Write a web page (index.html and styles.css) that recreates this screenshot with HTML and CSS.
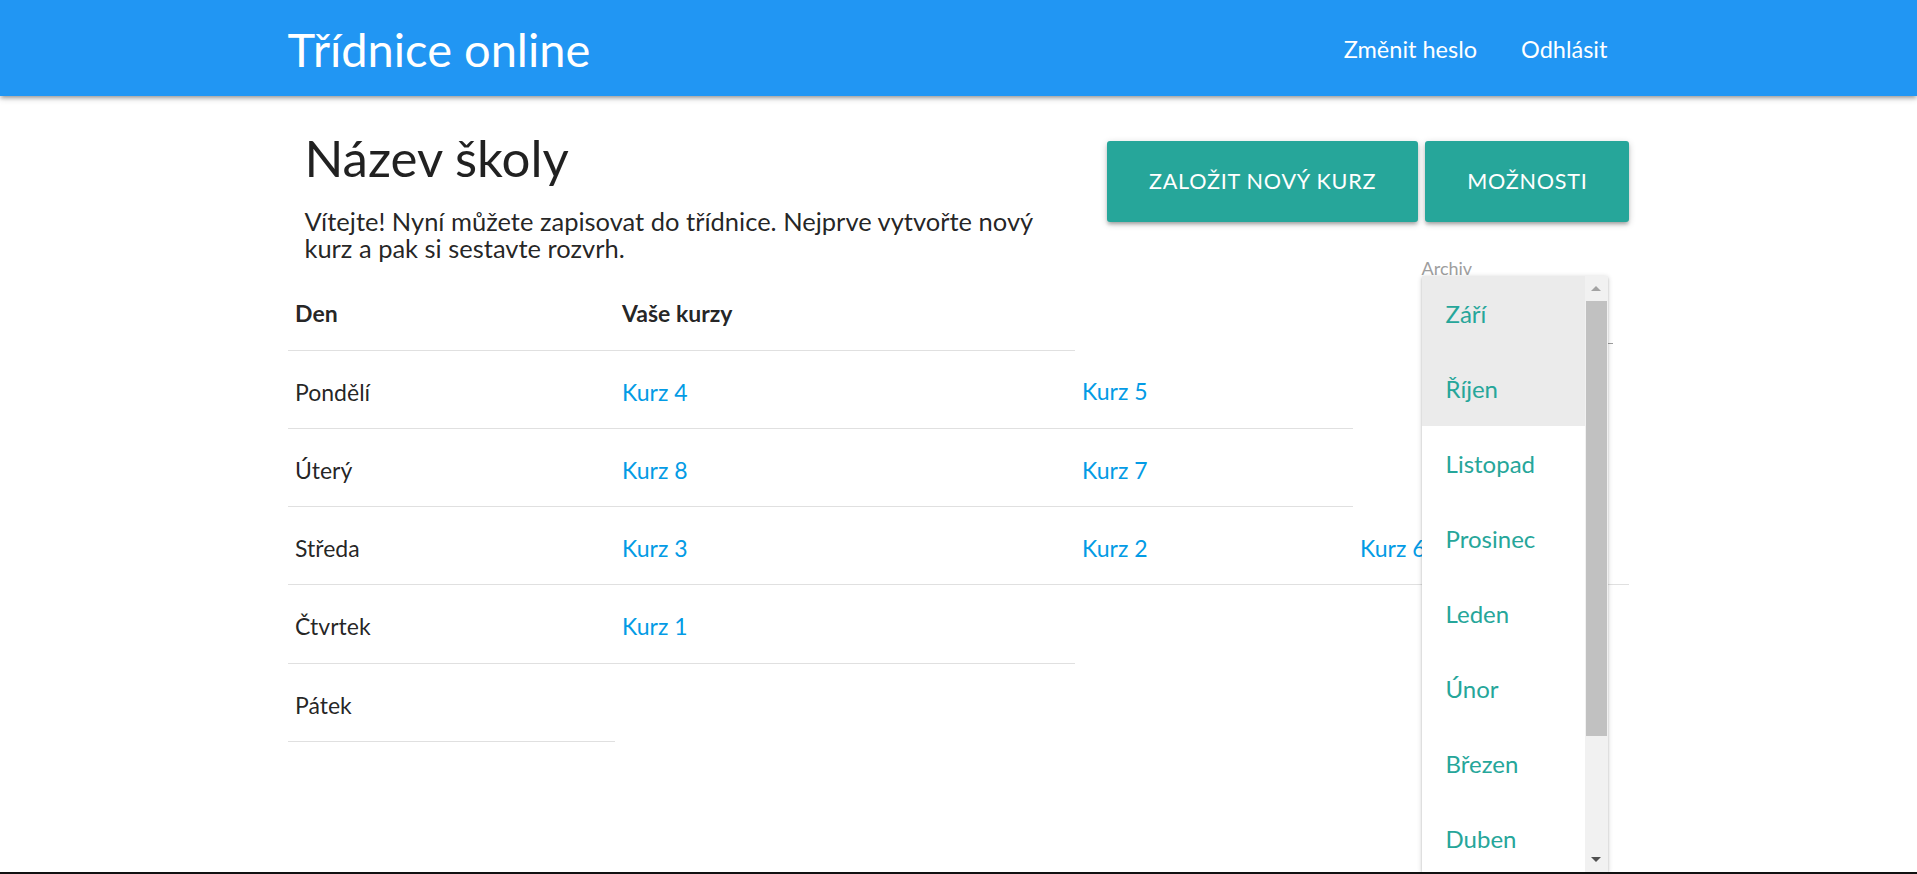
FILE: index.html
```html
<!DOCTYPE html>
<html lang="cs">
<head>
<meta charset="utf-8">
<title>Třídnice online</title>
<link rel="stylesheet" href="styles.css">
</head>
<body>
<header class="topbar">
  <div class="container nav">
    <a class="brand" href="#">Třídnice online</a>
    <ul class="nav-links">
      <li><a href="#">Změnit heslo</a></li>
      <li><a href="#">Odhlásit</a></li>
    </ul>
  </div>
</header>
<main class="container">
  <div class="top-row">
    <div class="intro">
      <h4 class="school">Název školy</h4>
      <p class="welcome">Vítejte! Nyní můžete zapisovat do třídnice. Nejprve vytvořte nový kurz a pak si sestavte rozvrh.</p>
    </div>
    <div class="actions">
      <div class="btns">
        <a class="btn" href="#">Založit nový kurz</a>
        <a class="btn" href="#">Možnosti</a>
      </div>
      <div class="select-field">
        <label class="select-label">Archiv</label>
        <div class="select-input">
          <div class="dropdown">
            <ul class="dropdown-items">
              <li class="item selected">Září</li>
              <li class="item selected">Říjen</li>
              <li class="item">Listopad</li>
              <li class="item">Prosinec</li>
              <li class="item">Leden</li>
              <li class="item">Únor</li>
              <li class="item">Březen</li>
              <li class="item">Duben</li>
            </ul>
            <div class="scrollbar">
              <div class="sb-btn"><span class="arrow-up"></span></div>
              <div class="sb-thumb"></div>
              <div class="sb-space"></div>
              <div class="sb-btn"><span class="arrow-down"></span></div>
            </div>
          </div>
        </div>
      </div>
    </div>
  </div>
  <table class="schedule">
    <colgroup>
      <col class="c-day">
      <col class="c-k1">
      <col class="c-k2">
      <col class="c-k3">
    </colgroup>
    <tr><th>Den</th><th>Vaše kurzy</th></tr>
    <tr><td>Pondělí</td><td><a href="#">Kurz 4</a></td><td><a href="#">Kurz 5</a></td></tr>
    <tr><td>Úterý</td><td><a href="#">Kurz 8</a></td><td><a href="#">Kurz 7</a></td></tr>
    <tr><td>Středa</td><td><a href="#">Kurz 3</a></td><td><a href="#">Kurz 2</a></td><td><a href="#">Kurz 6</a></td></tr>
    <tr><td>Čtvrtek</td><td><a href="#">Kurz 1</a></td></tr>
    <tr><td>Pátek</td></tr>
  </table>
</main>
<div class="screen-edge"></div>
</body>
</html>
```

FILE: styles.css
```css
html, body {
  margin: 0;
  padding: 0;
  overflow: hidden;
  height: 100%;
}
body {
  font-family: Lato, "Open Sans", sans-serif;
  color: rgba(0, 0, 0, 0.87);
  background: #fff;
}
.container {
  width: 70%;
  margin: 0 auto;
}
a {
  text-decoration: none;
}

/* top bar */
.topbar {
  height: 96px;
  background: #2196f3;
  box-shadow: 0 3px 3px 0 rgba(0,0,0,0.14), 0 4px 2px -3px rgba(0,0,0,0.12), 0 2px 7px 0 rgba(0,0,0,0.2);
  position: relative;
  z-index: 2;
}
.nav {
  display: flex;
  justify-content: space-between;
  align-items: center;
  height: 96px;
}
.brand {
  color: #fff;
  font-size: 47px;
  line-height: 96px;
  padding-top: 2px;
  white-space: nowrap;
}
.nav-links {
  list-style: none;
  margin: 0;
  padding: 0;
  display: flex;
}
.nav-links a {
  display: block;
  color: #fff;
  font-size: 23.5px;
  line-height: 96px;
  padding: 1px 22px 0;
}

/* top row */
.top-row {
  display: flex;
}
.intro {
  flex: 0 0 58.333%;
  box-sizing: border-box;
  padding: 0 16.875px;
}
.school {
  font-size: 51px;
  font-weight: 400;
  line-height: 56px;
  margin: 34px 0 22px;
}
.welcome {
  font-size: 25.5px;
  line-height: 27px;
  margin: 0;
}
.actions {
  flex: 1;
  position: relative;
}
.btns {
  display: flex;
  justify-content: flex-end;
  gap: 7px;
  margin-top: 45px;
}
.btn {
  display: block;
  height: 81px;
  line-height: 81px;
  padding: 0 42px;
  background: #26a69a;
  color: #fff;
  font-size: 21.6px;
  letter-spacing: 0.75px;
  text-transform: uppercase;
  border-radius: 3px;
  box-shadow: 0 3px 3px 0 rgba(0,0,0,0.14), 0 4px 2px -3px rgba(0,0,0,0.12), 0 2px 7px 0 rgba(0,0,0,0.2);
}

/* select with open dropdown */
.select-field {
  position: absolute;
  top: 164px;
  right: 16.875px;
  width: 191px;
}
.select-label {
  display: block;
  font-size: 18px;
  line-height: 16px;
  height: 16px;
  color: #9e9e9e;
}
.select-input {
  position: relative;
  height: 67px;
  border-bottom: 1px solid #9e9e9e;
}
.dropdown {
  position: absolute;
  top: 0;
  left: 0;
  width: 186px;
  height: 596px;
  display: flex;
  background: #fff;
  overflow: hidden;
  z-index: 5;
  box-shadow: 0 2px 2px 0 rgba(0,0,0,0.14), 0 3px 1px -2px rgba(0,0,0,0.12), 0 1px 5px 0 rgba(0,0,0,0.2);
}
.dropdown-items {
  flex: 1;
  list-style: none;
  margin: 0;
  padding: 0;
}
.item {
  height: 75px;
  line-height: 75px;
  padding: 0 24px;
  font-size: 24px;
  color: #26a69a;
}
.item.selected {
  background: #ebebeb;
}
.scrollbar {
  flex: 0 0 23px;
  background: #f1f1f1;
  display: flex;
  flex-direction: column;
}
.sb-btn {
  height: 25px;
  display: flex;
  align-items: center;
  justify-content: center;
}
.sb-thumb {
  height: 435px;
  margin: 0 1px;
  background: #c1c1c1;
}
.sb-space {
  flex: 1;
}
.arrow-up {
  width: 0;
  height: 0;
  border-left: 5px solid transparent;
  border-right: 5px solid transparent;
  border-bottom: 5px solid #a3a3a3;
}
.arrow-down {
  width: 0;
  height: 0;
  border-left: 5px solid transparent;
  border-right: 5px solid transparent;
  border-top: 5px solid #505050;
}

/* schedule table */
.schedule {
  width: 100%;
  border-collapse: collapse;
  table-layout: fixed;
  margin-top: 10.3px;
}
.c-day { width: 24.37%; }
.c-k1 { width: 34.28%; }
.c-k2 { width: 20.72%; }
.c-k3 { width: 20.63%; }
.schedule th,
.schedule td {
  padding: 25px 7.5px 20.3px;
  font-size: 23px;
  line-height: 32px;
  text-align: left;
  vertical-align: middle;
  border-bottom: 1px solid #e0e0e0;
}
.schedule th {
  font-weight: 700;
}
.schedule td a {
  color: #039be5;
}

.screen-edge {
  position: fixed;
  left: 0;
  right: 0;
  bottom: 0;
  height: 2px;
  background: #111;
  z-index: 10;
}
```
